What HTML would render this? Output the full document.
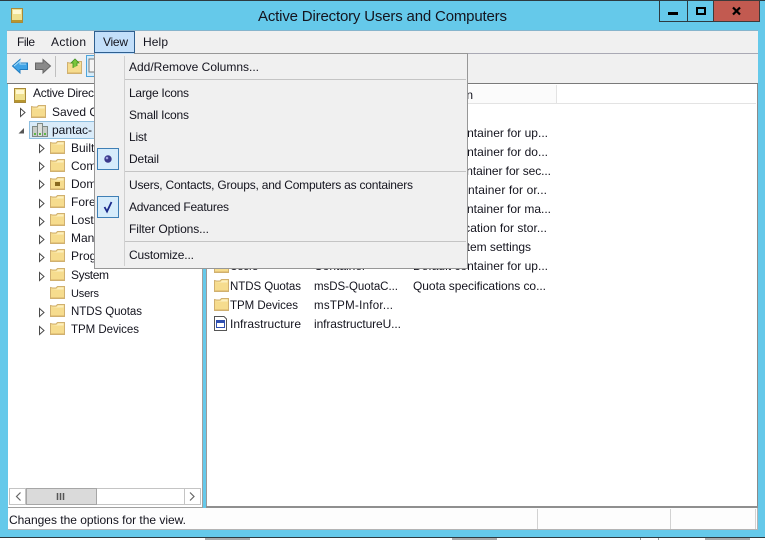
<!DOCTYPE html>
<html><head><meta charset="utf-8"><title>Active Directory Users and Computers</title>
<style>
html,body{margin:0;padding:0;width:765px;height:540px;overflow:hidden;background:#fff}
svg{display:block}
text{font-family:"Liberation Sans",sans-serif;font-size:12px;fill:#14141e}
</style></head><body>
<svg width="765" height="540" viewBox="0 0 765 540" xmlns="http://www.w3.org/2000/svg">
<defs>
<g id="f">
<path d="M.5 2.5V13.5H14.500V1.500H7.500L6 3H2.500Z" fill="#f6dc8e" stroke="#d0b070"/>
<path d="M1.500 4.500H13.500V2.500H8L6.500 4Z" fill="#fcefc0"/>
<path d="M1 12.500H14" stroke="#e6c67a"/>
</g>
<path id="e" d="M.5 .5L5 4.500L.5 8.500Z" fill="#fff" stroke="#4a4a4a"/>
</defs>

<rect width="765" height="537" fill="#65c9ea"/>
<rect width="765" height="1" fill="#2d3a40"/>
<rect y="537" width="765" height="1" fill="#2d3a40"/>
<rect x="640" y="538" width="1" height="2" fill="#999"/><rect x="658" y="538" width="1" height="2" fill="#999"/>
<rect x="205" y="538" width="45" height="2" fill="#aaa"/><rect x="452" y="538" width="45" height="2" fill="#aaa"/><rect x="705" y="538" width="45" height="2" fill="#aaa"/>

<!-- title -->
<path d="M11.500 8.500H22.500V22.500H11.500Z" fill="#efe08f" stroke="#a88a3a"/><rect x="13" y="10" width="8" height="4" fill="#fff8d0"/><rect x="12" y="20" width="10" height="2" fill="#b8962e"/>
<text x="258" y="21" style="font-size:15px" textLength="249" fill="#1a1a1a">Active Directory Users and Computers</text>

<!-- caption buttons -->
<rect x="659.500" y=".5" width="28" height="21" fill="#65c9ea" stroke="#2d3a40"/>
<rect x="687.500" y=".5" width="26" height="21" fill="#65c9ea" stroke="#2d3a40"/>
<rect x="713.500" y=".5" width="46" height="21" fill="#c25a50" stroke="#3d3a3a"/>
<rect x="668" y="12" width="10" height="3" fill="#000"/>
<rect x="697" y="8" width="8" height="6" fill="none" stroke="#000" stroke-width="2"/>
<path d="M733 7.500L740 14.500M740 7.500L733 14.500" stroke="#000" stroke-width="2.200" fill="none"/>

<!-- menu bar & toolbar -->
<rect x="7" y="30" width="751" height="54" fill="#f0f0f0"/>
<rect x="7" y="30" width="751" height="1" fill="#86b4cc"/>
<rect x="7" y="53" width="751" height="1" fill="#a9a9b4"/>
<rect x="7" y="83" width="751" height="1" fill="#7a7a7a"/>
<text x="17" y="46" textLength="18">File</text>
<text x="51" y="46" textLength="35">Action</text>
<rect x="94.500" y="31.500" width="40" height="21" fill="#c3dffa" stroke="#2f5f8f"/>
<text x="103" y="46" textLength="25">View</text>
<text x="143" y="46" textLength="25">Help</text>

<!-- toolbar icons -->
<path d="M12.500 66L20 59.500V63H27.500V69.500H20V73Z" fill="#3fa3e6" stroke="#1f7cc0"/>
<path d="M14 66L20 61V64H26" stroke="#a8defa" fill="none"/>
<path d="M50.500 66L43 59.500V63H35.500V69.500H43V73Z" fill="#8a8a8a" stroke="#666"/>
<rect x="55" y="56" width="1" height="21" fill="#c0c0c0"/>
<use href="#f" x="67" y="60"/>
<path d="M73 68L73 63L71 63L75 59L79 63L77 63L77 66" fill="#7cc63c" stroke="#3f8f20" stroke-width=".8"/>
<rect x="86.500" y="55.500" width="12" height="21" fill="#d6ecfa" stroke="#4ea5dc"/>
<rect x="89" y="59" width="9" height="13" fill="#f5f5f5" stroke="#777"/>

<!-- tree panel -->
<rect x="8" y="84" width="194" height="423" fill="#fff"/>
<rect x="202" y="84" width="1" height="423" fill="#a0a0a0"/>
<rect x="8" y="507" width="195" height="1" fill="#a0a0a0"/>
<!-- list panel -->
<rect x="207" y="84" width="550" height="423" fill="#fff"/>
<rect x="206" y="84" width="1" height="423" fill="#9a9a9a"/>
<rect x="757" y="84" width="1" height="423" fill="#8a8a8a"/>
<rect x="206" y="506" width="552" height="2" fill="#8f8f8f"/>
<rect x="208" y="85" width="348" height="18" fill="#fbfbfb"/>
<rect x="208" y="103" width="548" height="1" fill="#e3e3e3"/>
<rect x="556" y="85" width="1" height="18" fill="#e3e3e3"/>
<text x="413" y="99" textLength="60">Description</text>

<!-- tree -->
<path d="M14.500 88.500H25.500V102.500H14.500Z" fill="#efe08f" stroke="#a88a3a"/><rect x="16" y="90" width="8" height="4" fill="#fff8d0"/><rect x="15" y="100" width="10" height="2" fill="#b8962e"/>
<text x="33" y="97" textLength="61">Active Direc</text>
<use href="#e" x="20" y="108"/><use href="#f" x="31" y="104"/>
<text x="52" y="116">Saved Q</text>
<rect x="29.500" y="121.500" width="70" height="17" fill="#d9ebf9" stroke="#8fbfe0"/>
<path d="M18.500 133.500H24V128Z" fill="#555"/>
<rect x="32.500" y="126.500" width="5" height="10" fill="#c8ccc8" stroke="#7f8a85"/>
<rect x="37.500" y="123.500" width="5" height="13" fill="#dcdfdc" stroke="#7f8a85"/>
<rect x="42.500" y="126.500" width="5" height="10" fill="#c8ccc8" stroke="#7f8a85"/>
<rect x="34" y="133" width="2" height="2" fill="#5cb848"/><rect x="39" y="133" width="2" height="2" fill="#5cb848"/><rect x="44" y="133" width="2" height="2" fill="#5cb848"/>
<text x="52" y="134">pantac-</text>

<use href="#e" x="39" y="144"/><use href="#f" x="50" y="140"/><text x="71" y="152">Built</text>
<use href="#e" x="39" y="162"/><use href="#f" x="50" y="158"/><text x="71" y="170">Com</text>
<use href="#e" x="39" y="180"/><use href="#f" x="50" y="176"/><rect x="55" y="182" width="5" height="4" fill="#8a6a20"/><text x="71" y="188">Dom</text>
<use href="#e" x="39" y="199"/><use href="#f" x="50" y="194"/><text x="71" y="206">Fore</text>
<use href="#e" x="39" y="217"/><use href="#f" x="50" y="212"/><text x="71" y="224">Lost</text>
<use href="#e" x="39" y="235"/><use href="#f" x="50" y="230"/><text x="71" y="242">Man</text>
<use href="#e" x="39" y="253"/><use href="#f" x="50" y="248"/><text x="71" y="260">Prog</text>
<use href="#e" x="39" y="272"/><use href="#f" x="50" y="267"/><text x="71" y="279" textLength="38">System</text>
<use href="#f" x="50" y="285"/><text x="71" y="297" style="font-size:11px" textLength="28">Users</text>
<use href="#e" x="39" y="308"/><use href="#f" x="50" y="303"/><text x="71" y="315" textLength="71" style="font-size:11.500px">NTDS Quotas</text>
<use href="#e" x="39" y="326"/><use href="#f" x="50" y="321"/><text x="71" y="333" textLength="68" style="font-size:11.500px">TPM Devices</text>

<!-- tree scrollbar -->
<rect x="9.500" y="488.500" width="191" height="16" fill="#fff" stroke="#c4c4c4"/>
<rect x="9.500" y="488.500" width="16" height="16" fill="#fff" stroke="#c4c4c4"/>
<rect x="184.500" y="488.500" width="16" height="16" fill="#fff" stroke="#c4c4c4"/>
<rect x="26.500" y="488.500" width="70" height="16" fill="#dadada" stroke="#a6a6a6"/>
<path d="M20.500 492.500L16.500 496.500L20.500 500.500M190 492.500L194 496.500L190 500.500" stroke="#666" stroke-width="1.200" fill="none"/>
<path d="M57.500 493V500M60.500 493V500M63.500 493V500" stroke="#555" stroke-width="1.500"/>

<!-- list rows -->
<text x="413" y="137" textLength="135">Default container for up...</text>
<text x="413" y="156" textLength="135">Default container for do...</text>
<text x="413" y="175" textLength="138">Default container for sec...</text>
<text x="413" y="194" textLength="134">Default container for or...</text>
<text x="413" y="213" textLength="138">Default container for ma...</text>
<text x="413" y="232" textLength="134">Default location for stor...</text>
<text x="413" y="251" textLength="118">Builtin system settings</text>
<use href="#f" x="214" y="259"/>
<text x="230" y="270" style="font-size:11px" textLength="28">Users</text><text x="314" y="270" textLength="52">Container</text><text x="413" y="270" textLength="135">Default container for up...</text>

<use href="#f" x="214" y="278"/>
<text x="230" y="290" textLength="71" style="font-size:11.500px">NTDS Quotas</text><text x="314" y="290" textLength="84" style="font-size:11.500px">msDS-QuotaC...</text><text x="413" y="290" textLength="133">Quota specifications co...</text>
<use href="#f" x="214" y="297"/>
<text x="230" y="309" textLength="68" style="font-size:11.500px">TPM Devices</text><text x="314" y="309" textLength="79" style="font-size:11.500px">msTPM-Infor...</text>
<path d="M214.500 316.500H224L226.500 319V330.500H214.500Z" fill="#fff" stroke="#555"/>
<rect x="216" y="320" width="9" height="8" fill="#2f4fb0"/><rect x="217" y="323" width="7" height="4" fill="#fff"/>
<text x="230" y="328" textLength="71">Infrastructure</text><text x="314" y="328" textLength="87">infrastructureU...</text>

<!-- status bar -->
<rect x="8" y="508" width="750" height="22" fill="#fdfdfd"/>
<rect x="8" y="529" width="750" height="1" fill="#b4b4b4"/>
<rect x="537" y="509" width="1" height="20" fill="#d2d2d2"/><rect x="670" y="509" width="1" height="20" fill="#d2d2d2"/><rect x="755" y="509" width="1" height="20" fill="#d2d2d2"/>
<rect x="757" y="508" width="1" height="22" fill="#b4b4b4"/>
<text x="9" y="524" textLength="177">Changes the options for the view.</text>

<!-- dropdown menu -->
<rect x="94.500" y="53.500" width="373" height="215" fill="#f0f0f0" stroke="#979797"/>
<rect x="95" y="53" width="39" height="1" fill="#c3dffa"/>
<rect x="124" y="56" width="1" height="210" fill="#d0d0d0"/>
<rect x="125" y="79" width="341" height="1" fill="#c4c4c4"/>
<rect x="125" y="171" width="341" height="1" fill="#c4c4c4"/>
<rect x="125" y="241" width="341" height="1" fill="#c4c4c4"/>
<text x="129" y="71" textLength="130">Add/Remove Columns...</text>
<text x="129" y="97" textLength="60">Large Icons</text>
<text x="129" y="119" textLength="60">Small Icons</text>
<text x="129" y="141" textLength="18">List</text>
<text x="129" y="163" textLength="30">Detail</text>
<text x="129" y="189" textLength="284">Users, Contacts, Groups, and Computers as containers</text>
<text x="129" y="211" textLength="100">Advanced Features</text>
<text x="129" y="233" textLength="80">Filter Options...</text>
<text x="129" y="259" textLength="65">Customize...</text>
<rect x="97.500" y="148.500" width="21" height="21" fill="#d6ecfb" stroke="#3f7fb5"/>
<circle cx="108" cy="159" r="3.700" fill="#3a3a8c"/><circle cx="107" cy="158" r="1.300" fill="#a0a0e0"/>
<rect x="97.500" y="196.500" width="21" height="21" fill="#d6ecfb" stroke="#3f7fb5"/>
<path d="M104.500 207L107 211.500L111.500 202" fill="none" stroke="#1a2a8c" stroke-width="1.800"/>
</svg>
</body></html>
